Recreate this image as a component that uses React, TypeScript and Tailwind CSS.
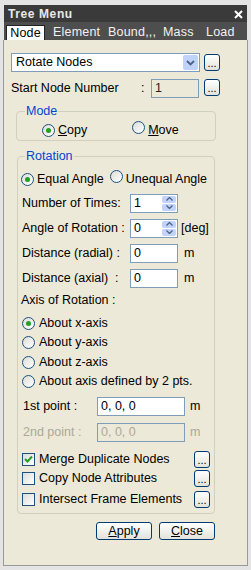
import React from "react";

const F = { fontFamily: '"Liberation Sans", Arial, sans-serif' };

function Radio({ checked }: { checked?: boolean }) {
  return (
    <span className="inline-flex items-center justify-center w-[13px] h-[13px] rounded-full border border-[#1c5180] bg-gradient-to-br from-[#dcdcd7] to-white shrink-0">
      {checked && <span className="w-[5px] h-[5px] rounded-full bg-[#21a121]" />}
    </span>
  );
}

function Check({ checked }: { checked?: boolean }) {
  return (
    <span className="inline-flex items-center justify-center w-[13px] h-[13px] border border-[#1c5180] bg-gradient-to-br from-[#dcdcd7] to-white shrink-0">
      {checked && (
        <svg width="9" height="9" viewBox="0 0 9 9">
          <path d="M1 4 L3.5 6.5 L8 1.5" stroke="#21a121" strokeWidth="2" fill="none" />
        </svg>
      )}
    </span>
  );
}

function Dots() {
  return (
    <span className="inline-flex items-end justify-center w-[16px] h-[17px] rounded-[3px] border border-[#003c74] bg-gradient-to-b from-white to-[#e3e3db] text-[11px] leading-[12px] text-black pb-[1px] shrink-0">
      ...
    </span>
  );
}

function Spin() {
  return (
    <span className="flex flex-col w-[14px] h-[15px] gap-[1px] mr-[1px]">
      <span className="flex-1 rounded-[2px] bg-[#c1d3fb] flex items-center justify-center">
        <svg width="7" height="4" viewBox="0 0 7 4"><path d="M0.5 3.5 L3.5 0.5 L6.5 3.5" stroke="#4d6185" strokeWidth="1.3" fill="none" /></svg>
      </span>
      <span className="flex-1 rounded-[2px] bg-[#c1d3fb] flex items-center justify-center">
        <svg width="7" height="4" viewBox="0 0 7 4"><path d="M0.5 0.5 L3.5 3.5 L6.5 0.5" stroke="#4d6185" strokeWidth="1.3" fill="none" /></svg>
      </span>
    </span>
  );
}

function Input({ value, spin, w = "w-[48px]", disabled, readOnly }: { value: string; spin?: boolean; w?: string; disabled?: boolean; readOnly?: boolean }) {
  const cls = disabled
    ? "bg-[#ece9d8] text-[#aca899]"
    : readOnly
    ? "bg-[#ece9d8] text-[#222]"
    : "bg-white text-black";
  return (
    <span className={`flex items-center h-[19px] ${w} border border-[#7f9db9] ${cls} pl-[3px] text-[12.5px] shrink-0`}>
      <span className="flex-1">{value}</span>
      {spin && <Spin />}
    </span>
  );
}

function Btn({ children }: { children: React.ReactNode }) {
  return (
    <span className="inline-flex items-center justify-center w-[56px] h-[18px] rounded-[3px] border border-[#003c74] bg-gradient-to-b from-white to-[#e3e3db] text-[12.5px] text-black">
      {children}
    </span>
  );
}

export default function App() {
  return (
    <div style={F} className="w-[251px] h-[570px] bg-[#e4e4e4] px-[3px] pt-[5px] pb-[4px] flex flex-col text-[12px] text-black">
      <div className="bg-[#3a3a3a] h-[17px] flex items-center justify-between pl-[4px] pr-[4px] ml-[1px] mr-[1px]">
        <span className="text-[#e8e8e8] font-bold text-[12px] tracking-[0.6px]">Tree Menu</span>
        <svg width="9" height="9" viewBox="0 0 9 9" className="mt-[2px]">
          <path d="M1 1 L8 8 M8 1 L1 8" stroke="#ffffff" strokeWidth="2" />
        </svg>
      </div>
      <div className="bg-[#4e4e4e] h-[18px] flex items-end pl-[2px] ml-[1px] mr-[1px] tracking-[0.2px] text-[12.5px]">
        <span className="h-[15px] w-[39px] bg-white border border-[#222] border-b-0 flex items-center justify-center text-black">Node</span>
        <span className="text-[#f2f2f2] ml-[8px] w-[55px] h-[15px] flex items-center">Element</span>
        <span className="text-[#f2f2f2] w-[55px] h-[15px] flex items-center">Bound,,,</span>
        <span className="text-[#f2f2f2] w-[43px] h-[15px] flex items-center">Mass</span>
        <span className="text-[#f2f2f2] h-[15px] flex items-center">Load</span>
      </div>
      <div className="flex-1 bg-[#ece9d8] border-l border-r border-b border-[#9a9a9a] flex flex-col pl-[7px] pr-[24px]">
        <div className="flex items-center mt-[13px] gap-[4px]">
          <span className="flex items-center h-[19px] w-[189px] border border-[#7f9db9] bg-white pl-[4px] text-[12.5px]">
            <span className="flex-1">Rotate Nodes</span>
            <span className="w-[15px] h-[15px] mr-[1px] rounded-[2px] bg-[#c1d3fb] flex items-center justify-center">
              <svg width="9" height="6" viewBox="0 0 9 6"><path d="M1 1 L4.5 4.5 L8 1" stroke="#4d6185" strokeWidth="1.8" fill="none" /></svg>
            </span>
          </span>
          <Dots />
        </div>
        <div className="flex items-center mt-[7px] text-[12.5px]">
          <span className="w-[130px]">Start Node Number</span>
          <span className="w-[10px]">:</span>
          <Input value="1" readOnly />
          <span className="ml-[5px]"><Dots /></span>
        </div>
        <fieldset className="mt-[6px] ml-[5px] mr-[7px] border border-[#d0d0bf] rounded-[4px] h-[37px] px-[3px]">
          <legend className="text-[#0046d5] text-[12.5px] px-[1px] ml-[5px] leading-[14px]">Mode</legend>
          <div className="flex items-center mt-[3px] ml-[22px]">
            <Radio checked />
            <span className="ml-[3px] text-[12.5px]"><u>C</u>opy</span>
            <span className="ml-[45px]"><Radio /></span>
            <span className="ml-[3px] text-[12.5px]"><u>M</u>ove</span>
          </div>
        </fieldset>
        <fieldset className="mt-[8px] ml-[6px] mr-[8px] border border-[#d0d0bf] rounded-[4px] h-[365px] px-[3px] text-[12.5px]">
          <legend className="text-[#0046d5] px-[1px] ml-[4px] leading-[14px]">Rotation</legend>
          <div className="flex items-center mt-[7px]">
            <Radio checked />
            <span className="ml-[3px]">Equal Angle</span>
            <span className="ml-[6px]"><Radio /></span>
            <span className="ml-[3px]">Unequal Angle</span>
          </div>
          <div className="flex items-center mt-[5px] h-[19px]">
            <span className="w-[109px] pl-[1px]">Number of Times:</span>
            <Input value="1" spin />
          </div>
          <div className="flex items-center mt-[6px] h-[19px]">
            <span className="w-[109px] pl-[1px]">Angle of Rotation :</span>
            <Input value="0" spin />
            <span className="ml-[3px]">[deg]</span>
          </div>
          <div className="flex items-center mt-[6px] h-[19px]">
            <span className="w-[109px] pl-[1px]">Distance (radial) :</span>
            <Input value="0" />
            <span className="ml-[6px]">m</span>
          </div>
          <div className="flex items-center mt-[6px] h-[19px]">
            <span className="w-[109px] pl-[1px]">Distance (axial)&nbsp; :</span>
            <Input value="0" />
            <span className="ml-[6px]">m</span>
          </div>
          <div className="mt-[5px] h-[16px] flex items-center">Axis of Rotation :</div>
          <div className="flex items-center mt-[7px] h-[16px] pl-[1px]">
            <Radio checked /><span className="ml-[4px]">About x-axis</span>
          </div>
          <div className="flex items-center mt-[3px] h-[16px] pl-[1px]">
            <Radio /><span className="ml-[4px]">About y-axis</span>
          </div>
          <div className="flex items-center mt-[4px] h-[16px] pl-[1px]">
            <Radio /><span className="ml-[4px]">About z-axis</span>
          </div>
          <div className="flex items-center mt-[3px] h-[16px] pl-[1px]">
            <Radio /><span className="ml-[4px]">About axis defined by 2 pts.</span>
          </div>
          <div className="flex items-center mt-[7px] h-[19px]">
            <span className="w-[76px] pl-[2px]">1st point :</span>
            <Input value="0, 0, 0" w="w-[88px]" />
            <span className="ml-[5px]">m</span>
          </div>
          <div className="flex items-center mt-[7px] h-[19px] text-[#aca899]">
            <span className="w-[76px] pl-[2px]">2nd point :</span>
            <Input value="0, 0, 0" w="w-[88px]" disabled />
            <span className="ml-[5px]">m</span>
          </div>
          <div className="flex items-center mt-[9px] h-[17px] pl-[1px]">
            <Check checked /><span className="ml-[4px] w-[155px]">Merge Duplicate Nodes</span><Dots />
          </div>
          <div className="flex items-center mt-[2px] h-[17px] pl-[1px]">
            <Check /><span className="ml-[4px] w-[155px]">Copy Node Attributes</span><Dots />
          </div>
          <div className="flex items-center mt-[4px] h-[17px] pl-[1px]">
            <Check /><span className="ml-[4px] w-[155px]">Intersect Frame Elements</span><Dots />
          </div>
        </fieldset>
        <div className="flex justify-end gap-[7px] mt-[8px] mr-[8px]">
          <Btn><u>A</u>pply</Btn>
          <Btn><u>C</u>lose</Btn>
        </div>
      </div>
    </div>
  );
}
